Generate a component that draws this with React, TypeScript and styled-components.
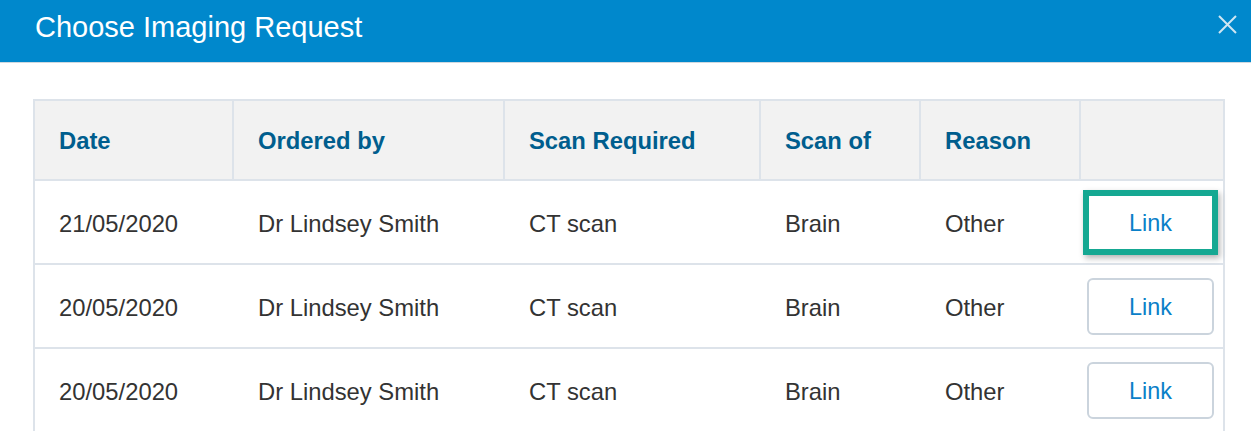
import React from 'react';
import styled, { createGlobalStyle } from 'styled-components';

const GlobalStyle = createGlobalStyle`
  html, body {
    margin: 0;
    padding: 0;
    background: #ffffff;
    font-family: "Liberation Sans", Arial, sans-serif;
  }
`;

const Modal = styled.div`
  width: 1251px;
  height: 432px;
  overflow: hidden;
  background: #fff;
`;

const Header = styled.div`
  height: 63px;
  background: rgb(0 136 204);
  border-bottom: 1px solid #cfd8df;
  display: flex;
  align-items: center;
  justify-content: space-between;
  padding: 0 14px 0 35px;
  box-sizing: border-box;
`;

const Title = styled.h2`
  margin: 0 0 8px 0;
  font-size: 29px;
  font-weight: normal;
  color: #ffffff;
`;

const CloseButton = styled.button`
  width: 19px;
  height: 19px;
  padding: 0;
  border: none;
  background: none;
  display: flex;
  margin-bottom: 13px;
  cursor: pointer;
`;

const Body = styled.div`
  padding: 36px 26px 0 33px;
`;

const Table = styled.div`
  border: 2px solid #dde3ea;
  border-bottom: none;
`;

const Row = styled.div<{ $head?: boolean }>`
  display: grid;
  grid-template-columns: 199px 271px 256px 160px 160px 1fr;
  height: ${p => (p.$head ? '78px' : '82px')};
  background: ${p => (p.$head ? '#f2f2f2' : '#ffffff')};
  & + & {
    border-top: 2px solid #dde3ea;
  }
`;

const HeadCell = styled.div<{ $last?: boolean }>`
  display: flex;
  align-items: center;
  padding-left: 24px;
  padding-top: 2px;
  font-size: 23.8px;
  font-weight: bold;
  color: #005e8e;
  border-right: ${p => (p.$last ? 'none' : '2px solid #dde3ea')};
`;

const Cell = styled.div`
  display: flex;
  align-items: center;
  padding-left: 24px;
  padding-top: 3px;
  font-size: 23.8px;
  color: #333333;
`;

const ActionCell = styled.div`
  display: flex;
  align-items: center;
  padding-left: 6px;
  padding-top: 1px;
`;

const LinkButton = styled.button<{ $focused?: boolean }>`
  width: 127px;
  height: 57px;
  box-sizing: border-box;
  padding-top: 3px;
  background: #ffffff;
  border: 2px solid ${p => (p.$focused ? '#15a892' : '#cbd4dd')};
  border-radius: ${p => (p.$focused ? '0' : '6px')};
  box-shadow: ${p =>
    p.$focused ? '0 0 0 4px #15a892, 2px 3px 6px 4px rgba(0, 0, 0, 0.3)' : 'none'};
  font-family: "Liberation Sans", Arial, sans-serif;
  font-size: 23.4px;
  color: #0a80c8;
  cursor: pointer;
`;

const rows = [
  { date: '21/05/2020', by: 'Dr Lindsey Smith', scan: 'CT scan', of: 'Brain', reason: 'Other' },
  { date: '20/05/2020', by: 'Dr Lindsey Smith', scan: 'CT scan', of: 'Brain', reason: 'Other' },
  { date: '20/05/2020', by: 'Dr Lindsey Smith', scan: 'CT scan', of: 'Brain', reason: 'Other' },
];

export default function App() {
  return (
    <Modal>
      <GlobalStyle />
      <Header>
        <Title>Choose Imaging Request</Title>
        <CloseButton aria-label="Close">
          <svg width="19" height="19" viewBox="0 0 19 19">
            <path d="M1 1 L18 18 M18 1 L1 18" stroke="#cfe6f3" strokeWidth="2" />
          </svg>
        </CloseButton>
      </Header>
      <Body>
        <Table>
          <Row $head>
            <HeadCell>Date</HeadCell>
            <HeadCell>Ordered by</HeadCell>
            <HeadCell>Scan Required</HeadCell>
            <HeadCell>Scan of</HeadCell>
            <HeadCell>Reason</HeadCell>
            <HeadCell $last />
          </Row>
          {rows.map((r, i) => (
            <Row key={i}>
              <Cell>{r.date}</Cell>
              <Cell>{r.by}</Cell>
              <Cell>{r.scan}</Cell>
              <Cell>{r.of}</Cell>
              <Cell>{r.reason}</Cell>
              <ActionCell>
                <LinkButton $focused={i === 0}>Link</LinkButton>
              </ActionCell>
            </Row>
          ))}
        </Table>
      </Body>
    </Modal>
  );
}
